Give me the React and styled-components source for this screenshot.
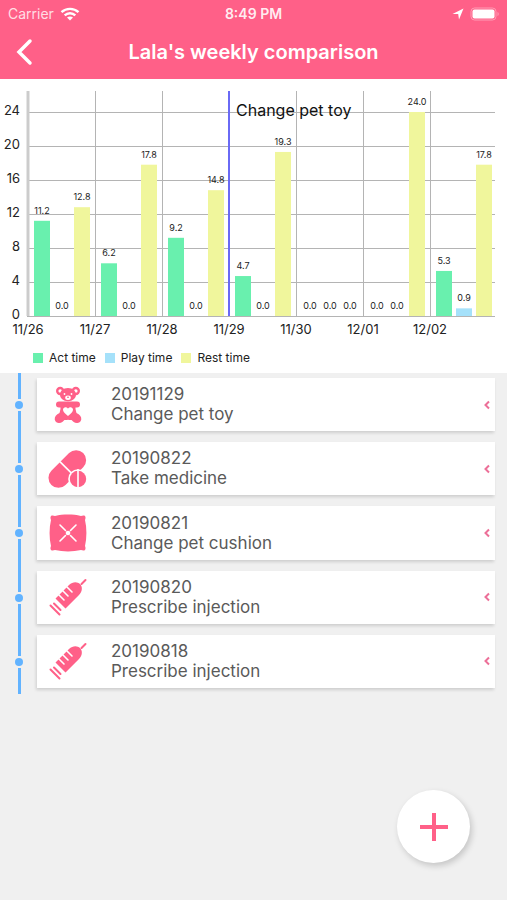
import styled, { createGlobalStyle } from 'styled-components';


const pink = '#ff6088';

const GlobalStyle = createGlobalStyle`
  *{ box-sizing: border-box; }
  body{
    margin: 0;  background-color: #f0f0f0;
    font-family: Inter, "Liberation Sans", sans-serif;
  }
`

const AppCover = styled.div`
  display: flex;  flex-direction: column;  min-height: 100vh;
`

const Header = styled.header`
  background-color: ${pink};  color: #fff;
`

const StatusBar = styled.div`
  display: grid;  grid-template-columns: 1fr auto 1fr;  align-items: center;
  height: 28px;  padding: 0 8px;
  font-size: 14px;  line-height: 20px;
`

const StatusSide = styled.div`
  display: flex;  align-items: center;  column-gap: 6px;
  justify-content: ${props => props.$end ? 'flex-end' : 'flex-start'};
  color: rgba(255,255,255,.8);
`

const StatusTime = styled.div`
  font-weight: 600;  color: rgba(255,255,255,.9);
`

const NavBar = styled.div`
  display: grid;  grid-template-columns: 48px 1fr 48px;  align-items: center;
  height: 51px;  padding-bottom: 3px;
`

const BackButton = styled.button`
  display: flex;  align-items: center;  justify-content: center;
  height: 48px;  padding: 0;
  border: none;  background: none;  color: #fff;  cursor: pointer;
`

const NavTitle = styled.h1`
  margin: 0;  text-align: center;  white-space: nowrap;
  font-size: 20px;  font-weight: 600;  line-height: 24px;
`

const ChartCover = styled.section`
  background-color: #fff;  padding-bottom: 6px;
`

const ChartSvg = styled.svg`
  display: block;  width: 100%;  height: auto;
`

const GridLine = styled.path`
  stroke: #b4b4b4;  shape-rendering: crispEdges;
`

const AxisText = styled.text`
  font-size: 13px;  fill: #222;
`

const ValueText = styled.text`
  font-size: 9px;  fill: #222;  text-anchor: middle;
`

const MarkText = styled.text`
  font-size: 16px;  fill: #111;
`

const Legend = styled.ul`
  display: flex;  column-gap: 9px;
  margin: 0;  padding: 0 33px;  list-style: none;
  font-size: 12px;  line-height: 18px;  color: #222;
`

const LegendItem = styled.li`
  display: flex;  align-items: center;  column-gap: 6px;

  &::before{
    content: '';  width: 10px;  height: 10px;
    background-color: ${props => props.color};
  }
`

const Timeline = styled.ul`
  display: flex;  flex-direction: column;
  min-height: 321px;  margin: 0;  padding: 0 12px 0 14px;  list-style: none;
`

const TimelineRow = styled.li`
  display: flex;  flex: 1;  column-gap: 13px;
`

const Rail = styled.div`
  display: flex;  flex-direction: column;  align-items: center;
  width: 10px;  row-gap: 2px;
`

const RailLine = styled.div`
  width: 3px;  background-color: #62b3ff;
  ${props => props.$top ? 'height: 26px;' : 'flex: 1;'}
`

const RailDot = styled.div`
  width: 8px;  height: 8px;  border-radius: 50%;
  background-color: #62b3ff;
`

const EventCard = styled.button`
  display: flex;  align-items: center;  flex: 1;
  margin: 5px 0 6px;  padding: 0 4px 0 11px;
  border: none;  background-color: #fff;
  box-shadow: -1px 2px 3px rgba(0,0,0,.14);
  font-family: inherit;  color: #5a5a5a;  text-align: left;  cursor: pointer;
`

const EventText = styled.span`
  display: flex;  flex-direction: column;  flex: 1;
  margin-left: 23px;  padding-bottom: 1px;
  font-size: 17px;  line-height: 20px;
`

const AddButton = styled.button`
  position: fixed;  right: 37px;  bottom: 37px;
  display: flex;  align-items: center;  justify-content: center;
  width: 73px;  height: 73px;  padding: 0;
  border: none;  border-radius: 50%;  background-color: #fff;
  box-shadow: 2px 3px 6px rgba(0,0,0,.18);  cursor: pointer;
`


const series = [
  { key: 'act', name: 'Act time', color: '#69f0ae' },
  { key: 'play', name: 'Play time', color: '#a5e1fa' },
  { key: 'rest', name: 'Rest time', color: '#f0f69c' },
]

const days = [
  { date: '11/26', act: 11.2, play: 0, rest: 12.8 },
  { date: '11/27', act: 6.2, play: 0, rest: 17.8 },
  { date: '11/28', act: 9.2, play: 0, rest: 14.8 },
  { date: '11/29', act: 4.7, play: 0, rest: 19.3 },
  { date: '11/30', act: 0, play: 0, rest: 0 },
  { date: '12/01', act: 0, play: 0, rest: 24 },
  { date: '12/02', act: 5.3, play: 0.9, rest: 17.8 },
]

const events = [
  { date: '20191129', name: 'Change pet toy', icon: 'toy' },
  { date: '20190822', name: 'Take medicine', icon: 'medicine' },
  { date: '20190821', name: 'Change pet cushion', icon: 'cushion' },
  { date: '20190820', name: 'Prescribe injection', icon: 'injection' },
  { date: '20190818', name: 'Prescribe injection', icon: 'injection' },
]


function ToyIcon() {
  return (
    <svg width="40" height="40" viewBox="0 0 40 40" fill={pink} aria-hidden="true">
      <circle cx="12.2" cy="6" r="3" fill="none" stroke={pink} strokeWidth="2.4" />
      <circle cx="27.800" cy="6" r="3" fill="none" stroke={pink} strokeWidth="2.4" />
      <path d="M20 3c5 0 8 3 8 6.800 0 3.600-3.400 6.400-8 6.400s-8-2.800-8-6.400c0-3.800 3-6.800 8-6.800z" />
      <rect x="8" y="16.500" width="24" height="6" rx="3" />
      <path d="M12.500 17h15v7l1.500 6v5h-18v-5l1.500-6z" />
      <ellipse cx="12" cy="33" rx="5.600" ry="4.600" transform="rotate(-35 12 33)" />
      <ellipse cx="28" cy="33" rx="5.600" ry="4.600" transform="rotate(35 28 33)" />
      <g fill="#fff">
        <ellipse cx="20" cy="12.800" rx="2.800" ry="2.200" />
        <circle cx="16.500" cy="9" r=".9" />
        <circle cx="23.500" cy="9" r=".9" />
        <path d="M20 31c-3-2.200-5-4-5-6.200 0-1.600 1.200-2.600 2.500-2.600 1 0 2 .5 2.500 1.500.5-1 1.500-1.500 2.500-1.500 1.300 0 2.500 1 2.500 2.600 0 2.200-2 4-5 6.200z" />
        <path d="M17 38c.5-2 1.500-3.200 3-3.200s2.500 1.200 3 3.200z" />
      </g>
      <ellipse cx="20" cy="12.300" rx="1" ry=".7" />
    </svg>
  )
}

function MedicineIcon() {
  return (
    <svg width="40" height="40" viewBox="0 0 40 40" aria-hidden="true">
      <g transform="rotate(-45 20 20)">
        <rect x="-3" y="9.500" width="45" height="20" rx="10" fill={pink} />
        <path d="M19.500 9v21" stroke="#fff" strokeWidth="1.600" />
      </g>
      <circle cx="30" cy="30" r="9.800" fill="#fff" />
      <circle cx="30" cy="30" r="8.200" fill={pink} />
      <path d="M30 20v19" stroke="#fff" strokeWidth="1.600" />
    </svg>
  )
}

function CushionIcon() {
  return (
    <svg width="40" height="40" viewBox="0 0 40 40" aria-hidden="true">
      <path fill={pink} d="M3 3c1-.9 2.800-.5 4 0 8-1.900 18-1.900 26 0 1.200-.5 3-.9 4 0 .9 1 .5 2.800 0 4 1.900 8 1.900 18 0 26 .5 1.200.9 3 0 4-1 .9-2.800.5-4 0-8 1.900-18 1.900-26 0-1.200.5-3 .9-4 0-.9-1-.5-2.800 0-4-1.900-8-1.900-18 0-26-.5-1.200-.9-3 0-4z" />
      <path d="M12 12l5.500 5.500M28 12l-5.500 5.500M12 28l5.500-5.500M28 28l-5.500-5.500" stroke="#fff" strokeWidth="1.600" strokeLinecap="round" />
      <circle cx="20" cy="20" r="2.300" fill="#fff" />
    </svg>
  )
}

function InjectionIcon() {
  return (
    <svg width="40" height="40" viewBox="0 0 40 40" aria-hidden="true">
      <path fill={pink} d="M7.500 21.500L21 8c3.800-3.800 8.500-3.500 11-1 2.500 2.600 2.800 7.200-1 11L17.500 31.500z" />
      <path d="M10.500 17.500l5.500 5.500M14.500 13.500l5.500 5.500M18.500 9.500l5.500 5.500" stroke="#fff" strokeWidth="1.600" strokeLinecap="round" />
      <path d="M33.500 7l4-4M6 26.500l6.500 6.500M2.500 28.500l9 9" stroke={pink} strokeWidth="2" strokeLinecap="round" />
    </svg>
  )
}

const icons = {
  toy: ToyIcon,
  medicine: MedicineIcon,
  cushion: CushionIcon,
  injection: InjectionIcon,
}


function StatusIcons() {
  return (
    <StatusSide $end>
      <svg width="12" height="12" viewBox="0 0 12 12" fill="#fff" aria-hidden="true">
        <path d="M11.500.5L7 11.500 6.200 6H.500z" />
      </svg>
      <svg width="29" height="14" viewBox="0 0 29 14" aria-hidden="true">
        <rect x="1" y="1" width="25" height="12" rx="3.500" fill="none" stroke="#ff9cb5" />
        <rect x="2.500" y="2.500" width="22" height="9" rx="2" fill="#fff" />
        <path d="M27.500 5c1.600.6 1.600 3.400 0 4z" fill="#ff9cb5" />
      </svg>
    </StatusSide>
  )
}

const left = 28
const bottom = 237
const dayWidth = 67
const unit = 8.5

function Chart() {
  return (
    <ChartSvg viewBox="0 0 507 270" role="img" aria-label="Weekly activity">
      {[0, 4, 8, 12, 16, 20, 24].map(v => (
        <g key={v}>
          <GridLine d={`M27 ${bottom - v * unit}H495`} />
          <AxisText x="20" y={bottom - v * unit + 3} textAnchor="end">{v}</AxisText>
        </g>
      ))}
      <path d="M28 12V237" stroke="#ccc" strokeWidth="3" />
      {days.map((day, i) => {
        const x = left + i * dayWidth
        return (
          <g key={day.date}>
            {i > 0 && <GridLine d={`M${x} 12V237`} />}
            {series.map((s, n) => {
              const top = bottom - day[s.key] * unit
              return (
                <g key={s.key}>
                  <rect x={x + 6 + n * 20} y={top} width="16" height={bottom - top} fill={s.color} />
                  <ValueText x={x + 14 + n * 20} y={top - 7}>{day[s.key].toFixed(1)}</ValueText>
                </g>
              )
            })}
            <AxisText x={x} y="255" textAnchor="middle">{day.date}</AxisText>
          </g>
        )
      })}
      <path d="M229 12V237" stroke="#6a6af5" strokeWidth="2" />
      <MarkText x="236" y="37">Change pet toy</MarkText>
    </ChartSvg>
  )
}

function EventRow({ event }) {
  const Icon = icons[event.icon]

  return (
    <TimelineRow>
      <Rail>
        <RailLine $top />
        <RailDot />
        <RailLine />
      </Rail>
      <EventCard type="button">
        <Icon />
        <EventText>
          <span>{event.date}</span>
          <span>{event.name}</span>
        </EventText>
        <svg width="8" height="10" viewBox="0 0 8 10" aria-hidden="true">
          <path d="M6 1.500L2.500 5 6 8.500" fill="none" stroke="#ec6f98" strokeWidth="2" />
        </svg>
      </EventCard>
    </TimelineRow>
  )
}

function App() {
  return (
    <AppCover>
      <GlobalStyle />
      <Header>
        <StatusBar>
          <StatusSide>
            Carrier
            <svg width="20" height="14" viewBox="0 0 20 14" fill="none" stroke="#fff" strokeWidth="2.400" aria-hidden="true">
              <path d="M1.500 5.200c4.700-4.500 12.300-4.500 17 0M4.700 8.400c3-2.900 7.600-2.900 10.600 0" />
              <path d="M10 13.500L7 10.600c1.700-1.500 4.300-1.500 6 0z" fill="#fff" stroke="none" />
            </svg>
          </StatusSide>
          <StatusTime>8:49 PM</StatusTime>
          <StatusIcons />
        </StatusBar>
        <NavBar>
          <BackButton type="button" aria-label="Back">
            <svg width="18" height="28" viewBox="0 0 18 28" fill="none" stroke="#fff" strokeWidth="3.500" strokeLinecap="round" aria-hidden="true">
              <path d="M15 3L4 14l11 11" />
            </svg>
          </BackButton>
          <NavTitle>Lala's weekly comparison</NavTitle>
        </NavBar>
      </Header>
      <ChartCover>
        <Chart />
        <Legend>
          {series.map(s => <LegendItem key={s.key} color={s.color}>{s.name}</LegendItem>)}
        </Legend>
      </ChartCover>
      <Timeline>
        {events.map(event => <EventRow key={event.date} event={event} />)}
      </Timeline>
      <AddButton type="button" aria-label="Add event">
        <svg width="28" height="28" viewBox="0 0 28 28" stroke={pink} strokeWidth="4" aria-hidden="true">
          <path d="M14 0v28M0 14h28" />
        </svg>
      </AddButton>
    </AppCover>
  )
}


export default App;
